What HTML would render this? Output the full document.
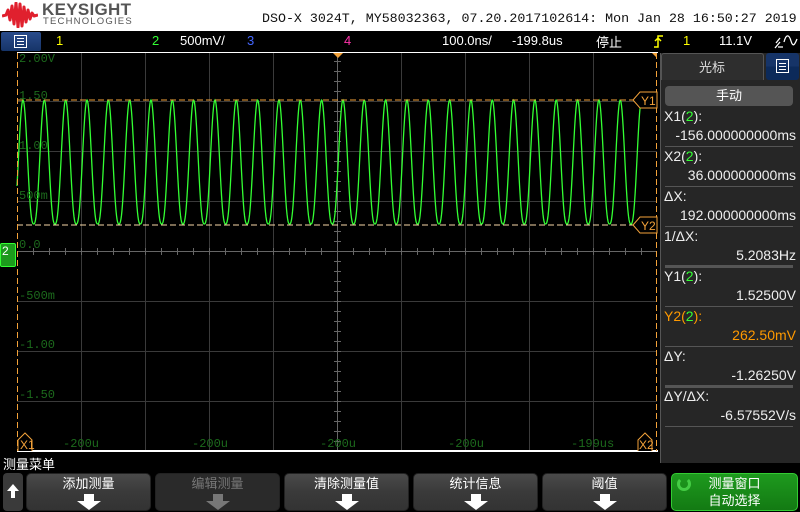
<!DOCTYPE html>
<html><head><meta charset="utf-8"><style>
*{margin:0;padding:0;box-sizing:border-box}
body{width:800px;height:512px;background:#000;position:relative;overflow:hidden;font-family:"Liberation Sans","Noto Sans CJK SC",sans-serif;color:#fff}
.a{position:absolute;white-space:nowrap}
.mono{font-family:"Liberation Mono","DejaVu Sans Mono",monospace}
.lbl{position:absolute;color:#1c6a1c;font-family:"Liberation Mono",monospace;font-size:12px}
.row{position:absolute;left:664px;width:132px;font-size:14px;color:#eee}
.sep{position:absolute;left:665px;width:128px;height:1px;background:#555}
.btn{position:absolute;top:473px;height:38px;width:125px;border-radius:5px;background:linear-gradient(#4a4a4a,#3a3a3a 50%,#333);border:1px solid #222;text-align:center;font-size:13px;color:#fff}
.btn .t{margin-top:2px;line-height:16px}
.arr{position:absolute;left:50%;top:20px;margin-left:-12px;width:24px;height:16px}
.sb{position:absolute;top:33px;font-size:13px}
</style></head><body>
<div class="a" style="left:0;top:0;width:800px;height:31px;background:#fff"></div>
<svg class="a" style="left:2px;top:2px" width="36" height="26" viewBox="0 0 36 26"><path d="M0 14 L4 13 L6 8 L8 18 L10 4 L12 22 L14 1 L16 25 L18 2 L20 24 L22 5 L24 20 L26 8 L28 17 L30 11 L32 14 L36 13" stroke="#e0202e" stroke-width="3" fill="none" stroke-linejoin="round"/></svg>
<div class="a" style="left:42px;top:1px;font-size:17px;line-height:17px;font-weight:bold;color:#555;letter-spacing:0.3px">KEYSIGHT</div>
<div class="a" style="left:43px;top:17px;font-size:9.5px;line-height:10px;color:#555;letter-spacing:1.2px">TECHNOLOGIES</div>
<div class="a mono" style="left:262px;top:11px;font-size:13.3px;color:#111">DSO-X 3024T, MY58032363, 07.20.2017102614: Mon Jan 28 16:50:27 2019</div>
<!-- status bar -->
<div class="a" style="left:1px;top:32px;width:40px;height:19px;background:linear-gradient(#2a4c8c,#163468);border-radius:2px"></div>
<div class="a" style="left:14px;top:35px;width:13px;height:13px;border:1px solid #fff"></div>
<div class="a" style="left:17px;top:38px;width:7px;height:1px;background:#fff;box-shadow:0 3px #fff,0 6px #fff"></div>
<div class="sb" style="left:56px;color:#ff0">1</div>
<div class="sb" style="left:152px;color:#3f3">2</div>
<div class="sb" style="left:180px">500mV/</div>
<div class="sb" style="left:247px;color:#46f">3</div>
<div class="sb" style="left:344px;color:#f3a">4</div>
<div class="sb" style="left:442px">100.0ns/</div>
<div class="sb" style="left:512px">-199.8us</div>
<div class="sb" style="left:596px;top:32px">停止</div>
<svg class="a" style="left:654px;top:35px" width="10" height="13" viewBox="0 0 10 13"><path d="M0 12H4V1H9M1 6L4 3L7 6" stroke="#ff0" stroke-width="1.5" fill="none"/></svg>
<div class="sb" style="left:683px;color:#ff0">1</div>
<div class="sb" style="left:719px">11.1V</div>
<svg class="a" style="left:774px;top:34px" width="24" height="15" viewBox="0 0 24 15"><path d="M1 14L6 8M4 13L9 13M2 9L6 4M10 8C12 0 15 0 17 7C19 14 21 10 23 5" stroke="#fff" stroke-width="1.3" fill="none"/></svg>
<!-- plot -->
<svg class="a" style="left:0;top:52px" width="660" height="400" viewBox="0 52 660 400">
<rect x="17" y="52" width="641" height="400" fill="#000"/>
<g stroke="#3a3a3a" stroke-width="1">
<path d="M81.5 53V451M145.5 53V451M209.5 53V451M273.5 53V451M401.5 53V451M465.5 53V451M529.5 53V451M593.5 53V451"/>
<path d="M17 101.5H657M17 151.5H657M17 201.5H657M17 301.5H657M17 351.5H657M17 401.5H657"/>
</g>
<g stroke="#666" stroke-width="1"><path d="M337.5 53V451M17 251.5H657"/>
<path id="tk" d=""/></g>
<line x1="17" y1="52.5" x2="658" y2="52.5" stroke="#fff"/>
<line x1="17" y1="451" x2="658" y2="451" stroke="#fff" stroke-width="2"/>
<path id="wave" d="" stroke="#3f3" stroke-width="1.3" fill="none"/>
<line x1="17" y1="100" x2="640" y2="100" stroke="#f3a23a" stroke-dasharray="6,3"/>
<line x1="17" y1="225" x2="640" y2="225" stroke="#f8d9a8" stroke-dasharray="6,3"/>
<line x1="17.5" y1="53" x2="17.5" y2="451" stroke="#f3a23a" stroke-dasharray="6,3"/>
<line x1="656.5" y1="53" x2="656.5" y2="451" stroke="#f3a23a" stroke-dasharray="6,3"/>
<path d="M333 53L338 58L343 53Z" fill="#f3a23a"/>
<path d="M652 53L657 53L657 58Z" fill="#f3a23a"/>
<g fill="#000" stroke="#f3a23a"><path d="M640 92H657V108H640L633 100Z"/><path d="M640 217H657V233H640L633 225Z"/>
<path d="M18 451V440L25 433L32 440V451"/><path d="M638 451V440L645 433L652 440V451"/></g>
<g fill="#f3a23a" font-family="Liberation Sans" font-size="12"><text x="641" y="105">Y1</text><text x="641" y="230">Y2</text><text x="20" y="449">X1</text><text x="639" y="449">X2</text></g>
</svg>
<div class="lbl" style="left:19px;top:52px">2.00V</div>
<div class="lbl" style="left:19px;top:89px">1.50</div>
<div class="lbl" style="left:19px;top:139px">1.00</div>
<div class="lbl" style="left:19px;top:189px">500m</div>
<div class="lbl" style="left:19px;top:238px">0.0</div>
<div class="lbl" style="left:19px;top:289px">-500m</div>
<div class="lbl" style="left:19px;top:338px">-1.00</div>
<div class="lbl" style="left:19px;top:388px">-1.50</div>
<div class="lbl" style="left:63px;top:437px">-200u</div>
<div class="lbl" style="left:192px;top:437px">-200u</div>
<div class="lbl" style="left:320px;top:437px">-200u</div>
<div class="lbl" style="left:448px;top:437px">-200u</div>
<div class="lbl" style="left:571px;top:437px">-199us</div>
<div class="a" style="left:0;top:243px;width:16px;height:24px;background:#1c9a1c;border:1px solid #3f3;border-radius:2px;font-size:12px;color:#fff;padding-left:1px">2</div>
<!-- right panel -->
<div class="a" style="left:660px;top:53px;width:140px;height:410px;background:#262626;border-left:1px solid #555"></div>
<div class="a" style="left:661px;top:53px;width:103px;height:27px;background:#2e2e2e;border:1px solid #555;border-radius:3px 3px 0 0;border-bottom:none"></div>
<div class="a" style="left:699px;top:57px;font-size:13px;color:#ddd">光标</div>
<div class="a" style="left:766px;top:53px;width:33px;height:27px;background:linear-gradient(#163468 50%,#0c2a5a 50%);border-radius:3px"></div>
<div class="a" style="left:776px;top:59px;width:13px;height:14px;border:1px solid #fff"></div>
<div class="a" style="left:779px;top:63px;width:7px;height:1px;background:#fff;box-shadow:0 3px #fff,0 6px #fff"></div>
<div class="a" style="left:665px;top:86px;width:128px;height:20px;background:#555;border-radius:4px;text-align:center;font-size:13px;line-height:20px">手动</div>
<div class="row" style="top:108px">X1(<span style="color:#3f3">2</span>):</div>
<div class="row" style="top:127px;text-align:right">-156.000000000ms</div>
<div class="sep" style="top:146px"></div>
<div class="row" style="top:148px">X2(<span style="color:#3f3">2</span>):</div>
<div class="row" style="top:167px;text-align:right">36.000000000ms</div>
<div class="sep" style="top:186px"></div>
<div class="row" style="top:188px">ΔX:</div>
<div class="row" style="top:207px;text-align:right">192.000000000ms</div>
<div class="sep" style="top:226px"></div>
<div class="row" style="top:228px">1/ΔX:</div>
<div class="row" style="top:247px;text-align:right">5.2083Hz</div>
<div class="sep" style="top:265px;height:3px"></div>
<div class="row" style="top:268px">Y1(<span style="color:#3f3">2</span>):</div>
<div class="row" style="top:287px;text-align:right">1.52500V</div>
<div class="sep" style="top:306px"></div>
<div class="row" style="top:308px;color:#f90">Y2(<span style="color:#3f3">2</span>):</div>
<div class="row" style="top:327px;text-align:right;color:#f90">262.50mV</div>
<div class="sep" style="top:346px"></div>
<div class="row" style="top:348px">ΔY:</div>
<div class="row" style="top:367px;text-align:right">-1.26250V</div>
<div class="sep" style="top:385px;height:3px"></div>
<div class="row" style="top:388px">ΔY/ΔX:</div>
<div class="row" style="top:407px;text-align:right">-6.57552V/s</div>
<div class="sep" style="top:426px"></div>
<!-- softkeys -->
<div class="a" style="left:3px;top:454px;font-size:13px">测量菜单</div>
<div class="a" style="left:3px;top:473px;width:20px;height:38px;border-radius:4px;background:#3a3a3a"></div>
<svg class="a" style="left:7px;top:484px" width="12" height="14" viewBox="0 0 12 14"><path d="M4 14V7H0L6 0L12 7H8V14Z" fill="#fff"/></svg>
<div class="btn" style="left:26px"><div class="t">添加测量</div><svg class="arr" viewBox="0 0 24 16"><path d="M7 0H17V7H24L12 16L0 7H7Z" fill="#fff"/></svg></div>
<div class="btn" style="left:155px;background:#2a2a2a;color:#777"><div class="t">编辑测量</div><svg class="arr" viewBox="0 0 24 16"><path d="M7 0H17V7H24L12 16L0 7H7Z" fill="#777"/></svg></div>
<div class="btn" style="left:284px"><div class="t">清除测量值</div><svg class="arr" viewBox="0 0 24 16"><path d="M7 0H17V7H24L12 16L0 7H7Z" fill="#fff"/></svg></div>
<div class="btn" style="left:413px"><div class="t">统计信息</div><svg class="arr" viewBox="0 0 24 16"><path d="M7 0H17V7H24L12 16L0 7H7Z" fill="#fff"/></svg></div>
<div class="btn" style="left:542px"><div class="t">阈值</div><svg class="arr" viewBox="0 0 24 16"><path d="M7 0H17V7H24L12 16L0 7H7Z" fill="#fff"/></svg></div>
<div class="btn" style="left:671px;width:127px;background:linear-gradient(#1e9a1e,#137a13);border-color:#3c3"><div class="t" style="line-height:17px;margin-top:1px">测量窗口<br>自动选择</div></div>
<div class="a" style="left:677px;top:477px;width:14px;height:14px;border:3px solid #4c4;border-radius:50%;border-top-color:transparent"></div>
<script>
var d='',x;
for(x=17;x<=640;x+=0.5){var ph=2*Math.PI*(x-23)/21.33;var c=(1+Math.cos(ph))/2;var y=224-124*Math.pow(c,1.3);d+=(x==17?'M':'L')+x+' '+y.toFixed(1);}
document.getElementById('wave').setAttribute('d',d);
var t='';for(x=33;x<657;x+=16){t+='M'+(x+.5)+' 248V255';}for(var y=61;y<451;y+=10){t+='M334 '+(y+.5)+'H341';}
document.getElementById('tk').setAttribute('d',t);
</script>
</body></html>
